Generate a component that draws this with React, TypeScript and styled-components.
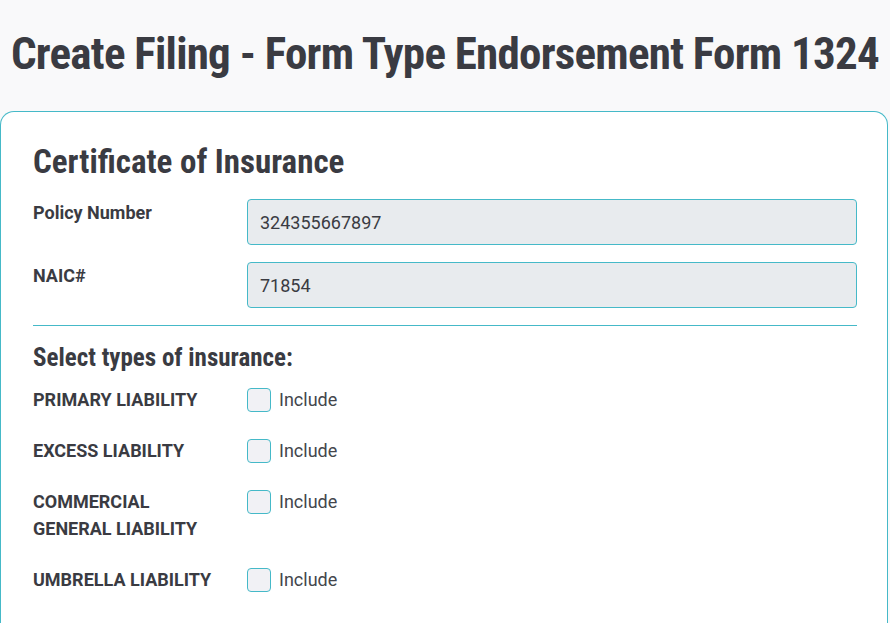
import React from "react";
import styled, { createGlobalStyle } from "styled-components";

const GlobalStyle = createGlobalStyle`
  html, body {
    margin: 0;
    padding: 0;
    background: #f9f9fa;
    font-family: Roboto, "Liberation Sans", sans-serif;
    color: #3a3b42;
  }
  * { box-sizing: border-box; }
`;

const Page = styled.div`
  width: 890px;
  height: 623px;
  overflow: hidden;
  display: flex;
  flex-direction: column;
`;

const Header = styled.header`
  height: 111px;
  display: flex;
  align-items: center;
  justify-content: center;
  padding-bottom: 3px;
`;

const Title = styled.h1`
  margin: 0;
  font-family: Roboto, "Open Sans", sans-serif;
  font-stretch: 75%;
  font-weight: 700;
  font-size: 45px;
  letter-spacing: -0.75px;
  line-height: 1.2;
  color: #3a3b42;
  white-space: nowrap;
`;

const Card = styled.section`
  flex: 1;
  margin-right: 2px;
  background: #ffffff;
  border: 1px solid #45b9c8;
  border-bottom: none;
  border-radius: 14px 14px 0 0;
  padding: 30px 30px 0 32px;
`;

const SectionTitle = styled.h2`
  margin: 0 0 17px;
  font-family: Roboto, "Open Sans", sans-serif;
  font-stretch: 75%;
  font-weight: 700;
  font-size: 33px;
  line-height: 40px;
  color: #3a3b42;
`;

const FieldRow = styled.div`
  display: grid;
  grid-template-columns: 214px 1fr;
  align-items: start;
  margin-bottom: 17px;
`;

const FieldLabel = styled.label`
  font-weight: 700;
  font-size: 18px;
  line-height: 27px;
  color: #3a3b42;
`;

const TextInput = styled.input`
  width: 100%;
  height: 46px;
  padding: 0 12px;
  font-family: Roboto, "Liberation Sans", sans-serif;
  font-size: 18px;
  color: #3a3b42;
  background: #e8ebee;
  border: 1px solid #45b9c8;
  border-radius: 4px;
  outline: none;
`;

const Divider = styled.hr`
  margin: 0 0 18px;
  border: none;
  border-top: 1px solid #45b9c8;
`;

const SubTitle = styled.h3`
  margin: 0 0 14px;
  font-family: Roboto, "Open Sans", sans-serif;
  font-stretch: 75%;
  font-weight: 700;
  font-size: 25px;
  line-height: 28px;
  color: #3a3b42;
`;

const TypeList = styled.div`
  display: flex;
  flex-direction: column;
  gap: 24px;
`;

const TypeRow = styled.div`
  display: grid;
  grid-template-columns: 214px 1fr;
  align-items: start;
`;

const TypeLabel = styled.div`
  width: 190px;
  font-weight: 700;
  font-size: 18px;
  line-height: 27px;
  text-transform: uppercase;
  color: #3a3b42;
`;

const CheckWrap = styled.label`
  display: flex;
  align-items: center;
  gap: 8px;
  height: 27px;
  font-size: 18px;
  color: #44464c;
`;

const Box = styled.input`
  appearance: none;
  margin: 0;
  width: 24px;
  height: 24px;
  background: #f1f1f5;
  border: 1px solid #45b9c8;
  border-radius: 4px;
`;

const types = [
  "Primary Liability",
  "Excess Liability",
  "Commercial General Liability",
  "Umbrella Liability",
];

export default function App() {
  return (
    <Page>
      <GlobalStyle />
      <Header>
        <Title>Create Filing - Form Type Endorsement Form 1324</Title>
      </Header>
      <Card>
        <SectionTitle>Certificate of Insurance</SectionTitle>
        <FieldRow>
          <FieldLabel>Policy Number</FieldLabel>
          <TextInput defaultValue="324355667897" />
        </FieldRow>
        <FieldRow>
          <FieldLabel>NAIC#</FieldLabel>
          <TextInput defaultValue="71854" />
        </FieldRow>
        <Divider />
        <SubTitle>Select types of insurance:</SubTitle>
        <TypeList>
          {types.map((t) => (
            <TypeRow key={t}>
              <TypeLabel>{t}</TypeLabel>
              <CheckWrap>
                <Box type="checkbox" />
                Include
              </CheckWrap>
            </TypeRow>
          ))}
        </TypeList>
      </Card>
    </Page>
  );
}
